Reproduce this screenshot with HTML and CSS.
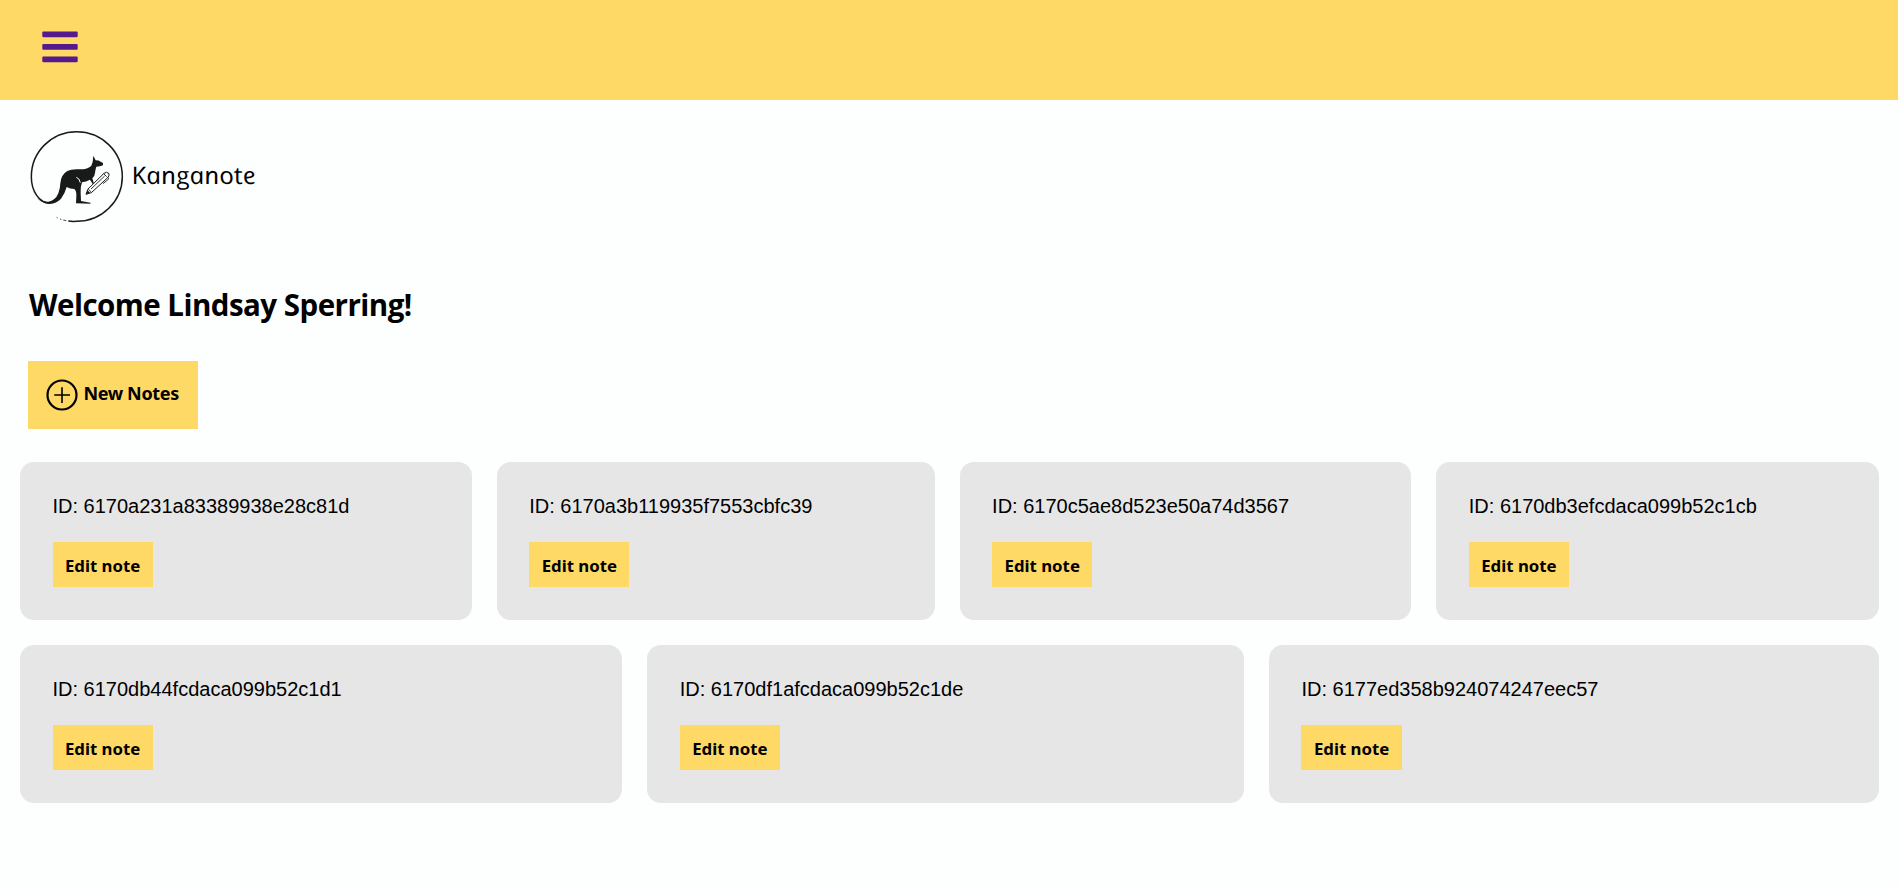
FILE: index.html
```html
<!DOCTYPE html>
<html lang="en">
<head>
<meta charset="utf-8">
<title>Kanganote</title>
<link rel="stylesheet" href="styles.css">
</head>
<body>
<header class="topbar">
  <a class="menu" href="#" aria-label="Menu">
    <svg width="36" height="32" viewBox="0 0 36 32"><g fill="#551a8b"><rect x=".3" y=".6" width="35.4" height="5.7" rx="1"/><rect x=".3" y="13.1" width="35.4" height="5.7" rx="1"/><rect x=".3" y="25.6" width="35.4" height="5.7" rx="1"/></g></svg>
  </a>
</header>
<main>
  <div class="logo">
    <svg class="mark" width="110" height="110" viewBox="0 0 330 330">
      <path d="M90 249C58 249 34 214 34 170A136 135 0 0 1 170 35A137 135 0 0 1 307 170A137 135 0 0 1 170 304Q155 305 145 303" fill="none" stroke="#171a19" stroke-width="4.5"/>
      <path d="M139 302L130 300M124 298L120 297M113 294L110 292" stroke="#171a19" stroke-width="2.4"/>
      <path d="M220 107L227 121Q237 121 242 125L249 129L249 136Q240 140 229 140Q226 149 225 159Q224 170 217 175L222 191L218 192L210 179Q198 186 186 187Q181 200 182 218L183 243L211 248L212 251L168 250L169 228Q170 213 163 207Q150 207 140 201Q135 220 123 236Q108 252 85 252Q63 249 50 232Q66 246 85 245Q106 242 115 220Q121 203 121 190Q123 164 142 153Q155 146 180 148Q204 148 214 137L218 126Z" fill="#171a19"/>
      <path d="M169 172Q178 174 181 188" fill="none" stroke="#fdfefe" stroke-width="3"/>
      <path d="M198 223L204 207L252 160Q260 153 267 161Q269 168 262 174L214 218Z" fill="#fdfefe" stroke="#171a19" stroke-width="3"/>
      <path d="M205 208L214 216M213 207L254 168M251 161L260 170M265 173L265 178L249 191" fill="none" stroke="#171a19" stroke-width="2.6"/>
      <path d="M198 223L203 211L210 218Z" fill="#171a19"/>
    </svg>
    <span class="wordmark">Kanganote</span>
  </div>
  <h1 class="welcome">Welcome Lindsay Sperring!</h1>
  <button class="new-note">
    <svg width="32" height="32" viewBox="0 0 32 32" fill="none" stroke="#000"><circle cx="16" cy="16" r="14.5" stroke-width="2.2"/><path d="M16 8.2V24M8.2 16H24" stroke-width="1.6"/></svg>
    <span>New Notes</span>
  </button>
  <section class="notes">
    <article class="note"><p>ID: 6170a231a83389938e28c81d</p><button class="edit">Edit note</button></article>
    <article class="note"><p>ID: 6170a3b119935f7553cbfc39</p><button class="edit">Edit note</button></article>
    <article class="note"><p>ID: 6170c5ae8d523e50a74d3567</p><button class="edit">Edit note</button></article>
    <article class="note"><p>ID: 6170db3efcdaca099b52c1cb</p><button class="edit">Edit note</button></article>
    <article class="note"><p>ID: 6170db44fcdaca099b52c1d1</p><button class="edit">Edit note</button></article>
    <article class="note"><p>ID: 6170df1afcdaca099b52c1de</p><button class="edit">Edit note</button></article>
    <article class="note"><p>ID: 6177ed358b924074247eec57</p><button class="edit">Edit note</button></article>
  </section>
</main>
</body>
</html>
```
FILE: styles.css
```css
* { box-sizing: border-box; }
body {
  margin: 0;
  background: #fdfefe;
  color: #000;
  font-family: "Liberation Sans", Arial, sans-serif;
}
.topbar {
  height: 100px;
  padding: 31px 42px;
  background: #ffd966;
}
.menu, .menu svg { display: block; }
.menu { width: 36px; }
.logo {
  display: flex;
  height: 110px;
  margin: 20px 0 0 20px;
}
.mark { flex: none; }
.wordmark {
  height: 34px;
  margin: 38px 0 0 1px;
  font: italic 400 24px/34px "Open Sans", sans-serif;
  letter-spacing: 0.1px;
  transform: scaleX(1.08) skewX(12deg);
  transform-origin: left center;
}
.welcome {
  margin: 54px 0 0 29px;
  font: 700 29.5px/42px "Open Sans", "Segoe UI", sans-serif;
  letter-spacing: -0.52px;
  white-space: nowrap;
}
.new-note {
  display: flex;
  align-items: center;
  gap: 5px;
  width: 170px;
  height: 68px;
  margin: 35px 0 0 28px;
  padding: 0 0 0 18.4px;
  border: 0;
  background: #ffd966;
  color: #000;
  font: 700 18px/24px "Noto Sans", Tahoma, sans-serif;
  letter-spacing: -0.35px;
  white-space: nowrap;
}
.new-note span { padding-bottom: 4px; }
.notes {
  display: flex;
  flex-wrap: wrap;
  gap: 25px;
  margin: 33px 19px 0 20px;
}
.note {
  flex: 1 1 auto;
  height: 158px;
  padding: 33px 32.5px;
  border-radius: 14px;
  background: #e6e6e6;
}
.note p {
  margin: 0 0 24px;
  font-size: 20px;
  line-height: 23px;
}
.edit {
  display: block;
  width: 100.3px;
  height: 45px;
  padding: 2px 0 0;
  border: 0;
  background: #ffd966;
  color: #000;
  font: 700 16.8px/22px "Noto Sans", Tahoma, sans-serif;
  white-space: nowrap;
}
```
